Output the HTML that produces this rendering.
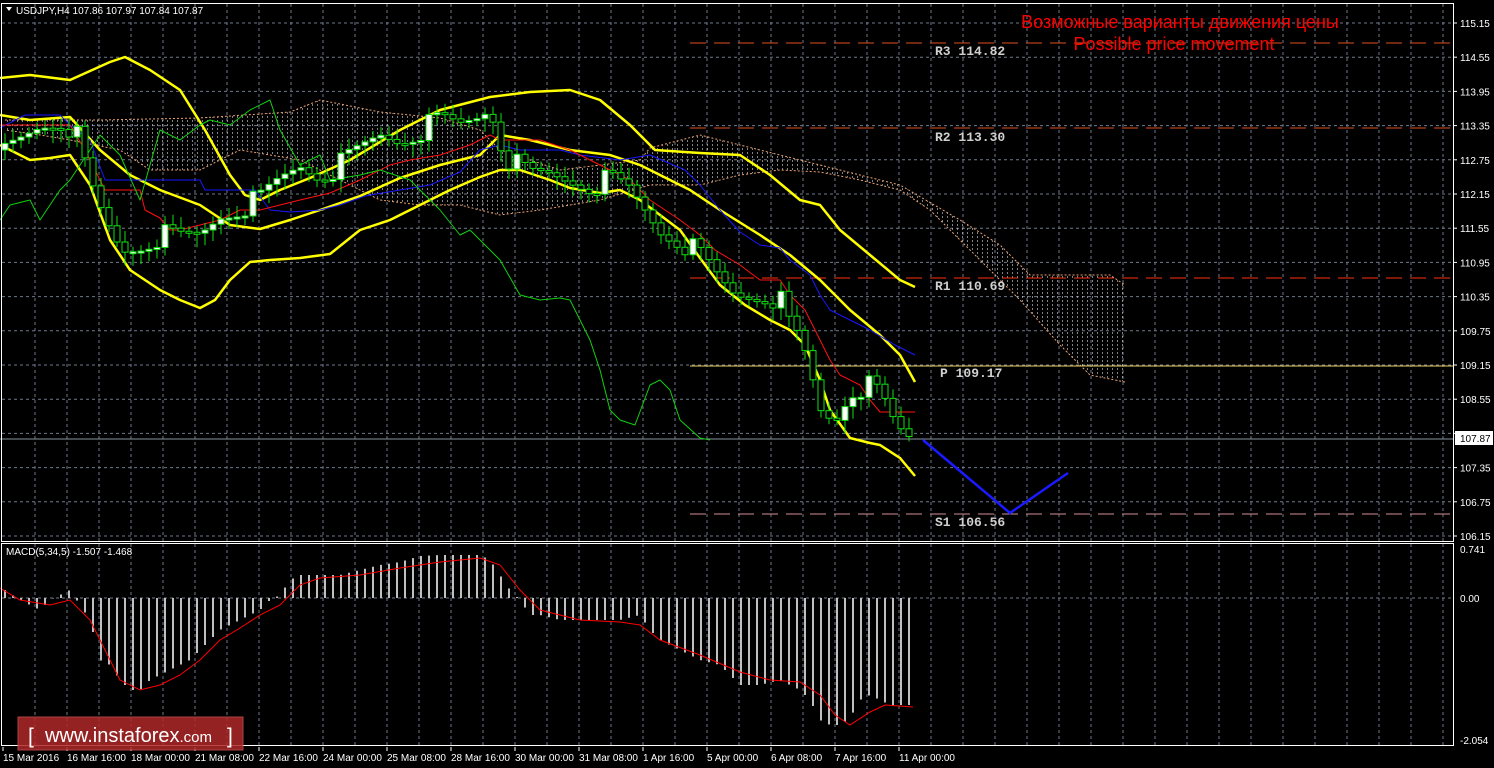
<!DOCTYPE html>
<html><head><meta charset="utf-8"><style>
html,body{margin:0;padding:0;background:#000;width:1494px;height:768px;overflow:hidden}
svg{display:block}
text{font-family:"Liberation Sans","DejaVu Sans",sans-serif}
.mono text{font-family:"Liberation Mono","DejaVu Sans Mono",monospace}
</style></head><body>
<svg id="s" width="1494" height="768" viewBox="0 0 1494 768" xmlns="http://www.w3.org/2000/svg">
<defs>
<pattern id="hatch" width="5" height="4" patternUnits="userSpaceOnUse">
<rect x="2" y="0" width="1" height="2" fill="#d8d8d8"/>
</pattern>
</defs>
<g id="grid" stroke="#6f7a8a" stroke-width="1" stroke-dasharray="3,3"></g>
<polygon points="5,120 100,120 200,118 290,112 320,100 380,112 440,118 480,130 500,150 560,170 640,160 650,148 700,135 740,145 780,155 820,165 860,175 900,185 960,220 1000,245 1030,275 1110,275 1125,285 1125,382 1090,375 1060,345 1020,300 990,270 960,240 930,210 900,190 860,180 820,172 780,170 740,175 700,185 650,185 600,200 540,210 500,215 460,205 420,205 380,200 340,180 300,160 240,150 200,170 150,170 120,150 70,140 40,135 5,130" fill="url(#hatch)" opacity="0.6"/>
<polyline points="5,120 100,120 200,118 290,112 320,100 380,112 440,118 480,130 500,150 560,170 640,160 650,148 700,135 740,145 780,155 820,165 860,175 900,185 960,220 1000,245 1030,275 1110,275 1125,285" fill="none" stroke="#e8a070" stroke-dasharray="2,2"/>
<polyline points="1125,382 1090,375 1060,345 1020,300 990,270 960,240 930,210 900,190 860,180 820,172 780,170 740,175 700,185 650,185 600,200 540,210 500,215 460,205 420,205 380,200 340,180 300,160 240,150 200,170 150,170 120,150 70,140 40,135 5,130" fill="none" stroke="#e8a070" stroke-dasharray="2,2"/>
<line x1="690" y1="43" x2="1453" y2="43" stroke="#e05020" stroke-dasharray="16,8"/>
<line x1="690" y1="128" x2="1453" y2="128" stroke="#e05020" stroke-dasharray="16,8"/>
<line x1="690" y1="278" x2="1453" y2="278" stroke="#ff3010" stroke-dasharray="16,8"/>
<line x1="690" y1="366" x2="1453" y2="366" stroke="#e8d060"/>
<line x1="690" y1="514" x2="1453" y2="514" stroke="#d09090" stroke-dasharray="16,8"/>
<line x1="0" y1="439" x2="1453" y2="439" stroke="#8a93a0"/>
<g class="mono" font-weight="bold" font-size="13" fill="#d0d0d0">
<text x="935" y="55">R3 114.82</text>
<text x="935" y="141">R2 113.30</text>
<text x="935" y="290">R1 110.69</text>
<text x="940" y="377">P 109.17</text>
<text x="935" y="526">S1 106.56</text>
</g>
<g id="ind" fill="none"></g>
<g id="candles"></g>
<polyline points="923,440 1010,513 1068,473" fill="none" stroke="#1a1aff" stroke-width="2.5"/>
<text x="1180" y="28" font-size="18" fill="#ff0000" text-anchor="middle">Возможные варианты движения цены</text>
<text x="1174" y="50" font-size="18" fill="#ff0000" text-anchor="middle">Possible price movement</text>
<g id="hist" stroke="#c0c0c0" stroke-width="2"></g>
<polyline points="0,588 20,600 50,605 70,600 90,620 100,640 110,660 120,680 140,690 160,685 180,675 200,660 220,640 240,628 260,615 280,605 300,585 320,578 360,575 400,568 440,562 480,558 500,565 520,590 540,610 580,620 620,622 640,625 660,640 700,655 740,672 770,680 800,682 820,695 835,715 850,725 870,712 885,705 913,707" fill="none" stroke="#ff0000"/>
<rect x="1.5" y="3.5" width="1452" height="538" fill="none" stroke="#fff"/>
<rect x="1.5" y="543.5" width="1452" height="202" fill="none" stroke="#fff"/>
<g id="axis" font-size="10" fill="#fff"></g>
<rect x="1455" y="431" width="38" height="14" fill="#fff"/>
<text x="1460" y="442" font-size="10" fill="#000">107.87</text>
<path d="M6,7 L12,7 L9,11 Z" fill="#fff"/>
<text x="16" y="14" font-size="10" fill="#fff">USDJPY,H4  107.86 107.97 107.84 107.87</text>
<text x="6" y="555" font-size="10" fill="#fff">MACD(5,34,5) -1.507 -1.468</text>
<text x="1460" y="553" font-size="10" fill="#fff">0.741</text>
<text x="1460" y="602" font-size="10" fill="#fff">0.00</text>
<text x="1460" y="744" font-size="10" fill="#fff">-2.054</text>
<g id="time" font-size="10" fill="#fff"></g>
<rect x="18" y="717" width="225" height="33" fill="#b02828" opacity="0.85" stroke="#c85050"/>
<text x="28" y="743" font-size="21" fill="#fff">[</text>
<text x="45" y="742" font-size="20" fill="#fff">www.instaforex<tspan font-size="15">.com</tspan></text>
<text x="227" y="743" font-size="21" fill="#fff">]</text>
</svg>
<script>
(function(){
var NS="http://www.w3.org/2000/svg";
function el(p,t,a){var e=document.createElementNS(NS,t);for(var k in a)e.setAttribute(k,a[k]);document.getElementById(p).appendChild(e);return e;}
for(var x=35;x<1453;x+=32){el("grid","line",{x1:x,y1:4,x2:x,y2:541});el("grid","line",{x1:x,y1:544,x2:x,y2:745});}
var prices=["115.15","114.55","113.95","113.35","112.75","112.15","111.55","110.95","110.35","109.75","109.15","108.55","107.95","107.35","106.75","106.15"];
for(var i=0;i<16;i++){var y=23+i*34.2;el("grid","line",{x1:2,y1:y,x2:1453,y2:y});
 if(prices[i]!="107.95"){var t=el("axis","text",{x:1460,y:y+4});t.textContent=prices[i];}
 el("axis","line",{x1:1453,y1:y,x2:1457,y2:y,stroke:"#fff"});}
el("grid","line",{x1:2,y1:598,x2:1453,y2:598});
var tl=["15 Mar 2016","16 Mar 16:00","18 Mar 00:00","21 Mar 08:00","22 Mar 16:00","24 Mar 00:00","25 Mar 08:00","28 Mar 16:00","30 Mar 00:00","31 Mar 08:00","1 Apr 16:00","5 Apr 00:00","6 Apr 08:00","7 Apr 16:00","11 Apr 00:00"];
for(var i=0;i<tl.length;i++){var t=el("time","text",{x:3+i*64,y:761});t.textContent=tl[i];el("time","line",{x1:3+i*64,y1:747,x2:3+i*64,y2:751,stroke:"#fff"});}
function interp(pts,x){for(var i=0;i<pts.length-1;i++){if(x>=pts[i][0]&&x<=pts[i+1][0]){var f=(x-pts[i][0])/(pts[i+1][0]-pts[i][0]);return pts[i][1]+f*(pts[i+1][1]-pts[i][1]);}}return pts[pts.length-1][1];}
function P(s){return s.trim().split(/\s+/).map(function(p){return p.split(",").map(Number);});}
var lines=[
["#ffff00",2.5,"0,78 30,75 70,80 110,62 125,57 150,70 180,90 205,130 230,175 245,195 260,200 280,190 310,178 350,160 400,130 440,110 490,97 530,92 570,90 600,100 630,125 655,150 700,153 740,155 770,175 800,200 820,205 840,230 870,255 900,280 915,287"],
["#ffff00",2.5,"0,115 30,120 70,117 100,150 130,175 160,190 200,205 230,225 260,229 290,220 320,210 360,196 400,178 440,165 480,155 500,135 530,140 570,150 610,155 640,165 660,175 690,190 720,210 760,235 790,255 820,280 850,310 880,335 900,355 915,382"],
["#ffff00",2.5,"0,145 30,160 50,158 70,155 90,185 110,240 130,270 160,290 180,300 200,308 215,300 230,280 250,262 270,260 300,258 330,254 360,230 390,220 420,205 450,190 480,177 500,170 520,170 550,180 570,188 600,193 620,190 640,200 660,215 680,230 700,258 720,285 745,305 770,320 790,330 805,345 820,380 830,410 850,438 870,443 880,445 900,458 915,476"],
["#1818ff",1,"0,128 25,115 60,115 70,125 90,140 105,180 200,180 205,190 255,190 270,210 290,212 320,210 340,205 365,196 400,190 430,185 460,172 480,150 500,145 520,150 560,150 580,155 620,160 650,155 685,170 700,185 720,210 740,232 760,245 780,248 790,260 810,275 820,295 830,310 850,320 870,330 895,345 915,355"],
["#ff1010",1,"0,125 70,125 85,150 105,190 140,190 145,210 160,218 170,230 180,230 220,220 240,210 260,210 280,205 300,200 330,193 360,180 390,165 410,160 440,155 470,145 490,135 500,140 540,140 570,150 600,165 630,180 650,200 680,220 700,235 715,250 740,265 760,280 780,280 790,295 805,310 815,330 830,360 840,375 860,385 870,400 880,412 915,412"],
["#10d010",1,"0,220 10,205 30,200 40,220 60,190 70,180 80,165 100,135 120,155 140,200 160,130 180,140 200,125 210,120 230,125 250,110 270,100 280,130 300,165 320,155 330,180 360,175 380,170 410,180 420,190 440,210 460,235 470,230 480,240 500,260 520,295 540,300 560,298 570,300 590,340 600,370 610,410 620,420 635,425 650,385 660,380 670,390 680,420 700,438 710,440"]];
lines.forEach(function(l){el("ind","polyline",{points:l[2],stroke:l[0],"stroke-width":l[1],"stroke-linejoin":"round"});});
var close=P("5,150 20,140 40,125 60,120 75,130 90,185 100,210 115,240 125,250 140,245 160,235 180,238 200,235 220,215 245,205 260,200 280,180 300,165 320,175 340,165 360,150 380,135 400,140 420,130 440,120 460,125 480,115 490,105 500,140 510,160 530,175 550,175 570,180 590,185 610,180 630,190 645,210 660,230 680,240 700,255 720,280 735,295 750,295 770,295 785,305 790,330 800,340 810,370 820,410 835,420 850,390 865,385 875,390 885,405 895,425 905,435 913,438");
var prev=interp(close,5);
for(var x=5;x<=913;x+=8){var c=interp(close,x)+((x*7)%11-5)*2.2;var o=prev;var hi=Math.min(o,c),lo=Math.max(o,c);if(lo-hi<2){lo=hi+2;}
 el("candles","line",{x1:x,y1:hi-5-(x%7),x2:x,y2:lo+5+(x%9),stroke:"#10e010"});
 el("candles","rect",{x:x-3,y:hi,width:6,height:lo-hi,fill:c<o?"#fff":"#000",stroke:"#10e010"});
 prev=c;}
var hist=P("5,590 20,600 30,605 40,610 50,600 60,595 70,590 80,605 90,620 100,660 110,665 120,680 130,690 140,690 150,680 160,675 170,670 180,665 190,660 200,650 210,640 220,630 230,625 240,620 250,615 260,610 270,600 280,595 290,580 300,575 340,575 360,570 380,565 400,562 420,556 440,555 480,555 490,560 500,575 510,590 520,600 530,615 540,615 560,620 620,620 640,615 650,630 660,640 680,650 700,660 720,665 740,685 760,685 780,680 800,690 810,700 820,720 830,725 840,725 850,718 860,700 870,695 880,700 890,705 913,705");
for(var x=5;x<=913;x+=8){var v=interp(hist,x);el("hist","line",{x1:x,y1:598,x2:x,y2:v});}
})();
</script>
</body></html>
